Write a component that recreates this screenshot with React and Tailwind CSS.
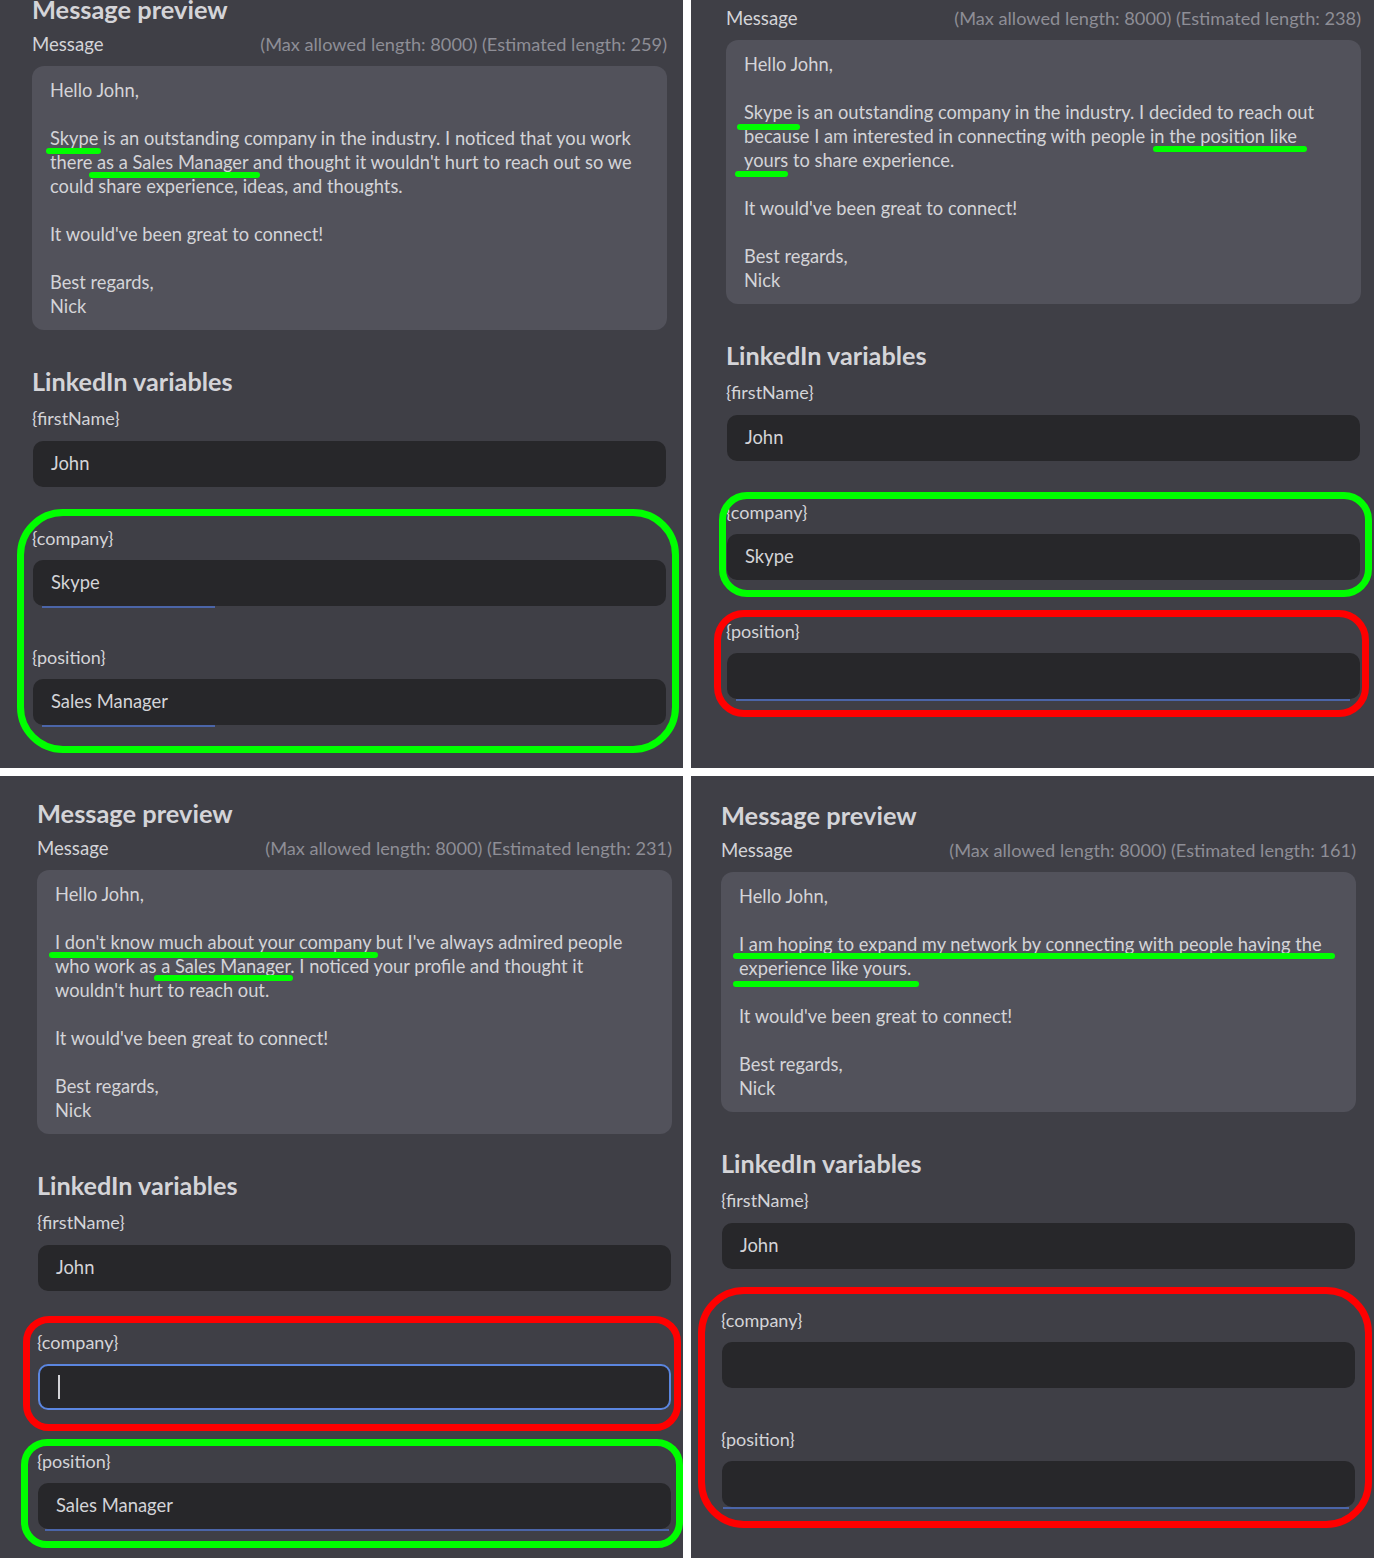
import React from "react";

const FONT = { fontFamily: "Lato, 'Liberation Sans', sans-serif" };

const panels = [
  {
    left: 32,
    top: -7,
    estimated: 259,
    lines: [
      "Hello John,",
      "",
      "Skype is an outstanding company in the industry. I noticed that you work",
      "there as a Sales Manager and thought it wouldn't hurt to reach out so we",
      "could share experience, ideas, and thoughts.",
      "",
      "It would've been great to connect!",
      "",
      "Best regards,",
      "Nick",
    ],
    company: "Skype",
    position: "Sales Manager",
    companyLine: { left: 9, width: 173 },
    positionLine: { left: 9, width: 173 },
    rings: [{ color: "green", cls: "left-[17px] top-[509px] w-[662px] h-[244px] rounded-[46px]" }],
    marks: [
      "left-[46px] top-[148px] w-[55px]",
      "left-[89px] top-[172px] w-[171px]",
    ],
  },
  {
    left: 35,
    top: -33,
    estimated: 238,
    lines: [
      "Hello John,",
      "",
      "Skype is an outstanding company in the industry. I decided to reach out",
      "because I am interested in connecting with people in the position like",
      "yours to share experience.",
      "",
      "It would've been great to connect!",
      "",
      "Best regards,",
      "Nick",
    ],
    company: "Skype",
    position: "",
    positionLine: { left: 9, width: 614 },
    rings: [
      { color: "green", cls: "left-[28px] top-[492px] w-[653px] h-[105px] rounded-[28px]" },
      { color: "red", cls: "left-[23px] top-[610px] w-[655px] h-[107px] rounded-[30px]" },
    ],
    marks: [
      "left-[46px] top-[124px] w-[63px]",
      "left-[462px] top-[146px] w-[154px]",
      "left-[44px] top-[171px] w-[53px]",
    ],
  },
  {
    left: 37,
    top: 21,
    estimated: 231,
    lines: [
      "Hello John,",
      "",
      "I don't know much about your company but I've always admired people",
      "who work as a Sales Manager. I noticed your profile and thought it",
      "wouldn't hurt to reach out.",
      "",
      "It would've been great to connect!",
      "",
      "Best regards,",
      "Nick",
    ],
    company: "",
    focused: true,
    position: "Sales Manager",
    positionLine: { left: 7, width: 624 },
    rings: [
      { color: "red", cls: "left-[23px] top-[540px] w-[658px] h-[115px] rounded-[26px]" },
      { color: "green", cls: "left-[21px] top-[663px] w-[662px] h-[109px] rounded-[26px]" },
    ],
    marks: [
      "left-[49px] top-[176px] w-[329px]",
      "left-[154px] top-[199px] w-[139px]",
    ],
  },
  {
    left: 30,
    top: 23,
    estimated: 161,
    lines: [
      "Hello John,",
      "",
      "I am hoping to expand my network by connecting with people having the",
      "experience like yours.",
      "",
      "It would've been great to connect!",
      "",
      "Best regards,",
      "Nick",
    ],
    company: "",
    position: "",
    positionLine: { left: 1, width: 626 },
    rings: [{ color: "red", cls: "left-[7px] top-[511px] w-[674px] h-[241px] rounded-[46px]" }],
    marks: [
      "left-[42px] top-[177px] w-[602px]",
      "left-[42px] top-[205px] w-[186px]",
    ],
  },
];

const Field = ({ label, value, line, focused, first }) => (
  <div className={first ? "mt-[9px]" : "mt-[39px]"}>
    <div className="h-6 leading-6 text-[18px] text-[#d4d4d8]">{label}</div>
    <div className={`relative ml-px w-[633px] ${first ? "mt-[11px]" : "mt-[10px]"}`}>
      <div
        className={`h-[46px] rounded-[10px] bg-[#27272a] flex items-center px-[18px] text-[18.4px] text-[#d4d4d8] ${
          focused ? "border-2 border-[#5b86e0] px-[16px]" : ""
        }`}
      >
        {focused ? <span className="w-[2px] h-[24px] bg-[#d4d4d8]" /> : value}
      </div>
      {line && (
        <div
          className="absolute bottom-[-2px] h-[2px] bg-[#4b65a8]"
          style={{ left: line.left, width: line.width }}
        />
      )}
    </div>
  </div>
);

const Panel = ({ p }) => (
  <div className="relative overflow-hidden bg-[#3f3f46]" style={FONT}>
    <div className="w-[635px]" style={{ marginLeft: p.left, marginTop: p.top }}>
      <h2 className="h-8 leading-8 text-[25.4px] font-bold text-[#d4d4d8]">Message preview</h2>
      <div className="mt-2 h-6 flex justify-between items-center">
        <span className="text-[18.6px] text-[#d4d4d8]">Message</span>
        <span className="text-[18.2px] text-[#8e8e96]">
          (Max allowed length: 8000) (Estimated length: {p.estimated})
        </span>
      </div>
      <div className="mt-[9px] rounded-xl bg-[#52525b] px-[18px] py-3 text-[18.3px] text-[#d4d4d8]">
        {p.lines.map((l, i) => (
          <div key={i} className="h-6 leading-6 whitespace-nowrap">
            {l}
          </div>
        ))}
      </div>
      <h2 className="mt-[35px] h-8 leading-8 text-[25.2px] font-bold text-[#d4d4d8]">LinkedIn variables</h2>
      <Field first label="{firstName}" value="John" />
      <Field label="{company}" value={p.company} line={p.companyLine} focused={p.focused} />
      <Field label="{position}" value={p.position} line={p.positionLine} />
    </div>

    {p.rings.map((r, i) => (
      <div
        key={i}
        className={`absolute border-[7px] pointer-events-none ${
          r.color === "green" ? "border-[#00ff00]" : "border-[#ff0000]"
        } ${r.cls}`}
      />
    ))}
    {p.marks.map((m, i) => (
      <div key={i} className={`absolute h-[6px] rounded-full bg-[#00ff00] ${m}`} />
    ))}
  </div>
);

export default function App() {
  return (
    <div className="w-[1374px] h-[1558px] bg-white grid grid-cols-[683px_683px] grid-rows-[768px_782px] gap-[8px]">
      {panels.map((p, i) => (
        <Panel key={i} p={p} />
      ))}
    </div>
  );
}
